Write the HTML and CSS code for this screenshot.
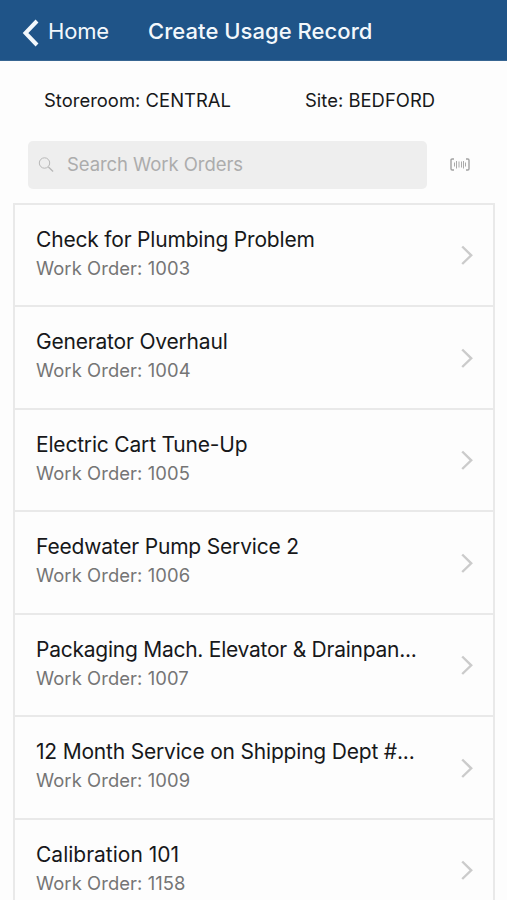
FILE: index.html
```html
<!DOCTYPE html>
<html lang="en">
<head>
<meta charset="utf-8">
<title>Create Usage Record</title>
<link rel="stylesheet" href="styles.css">
</head>
<body>
<svg class="defs" aria-hidden="true"><symbol id="chevron" viewBox="0 0 14 22"><path d="M2.2 2.5 11.2 11.3 2.2 20" fill="none" stroke="currentColor" stroke-width="2.4"/></symbol></svg>
<header class="bar">
  <a class="back"><svg class="back-icon" viewBox="0 0 18 28"><path d="M15 2 3.5 14 15 26" fill="none" stroke="currentColor" stroke-width="4"/></svg><span class="home">Home</span></a>
  <h1 class="heading">Create Usage Record</h1>
</header>
<div class="context"><span class="storeroom">Storeroom: CENTRAL</span><span class="site">Site: BEDFORD</span></div>
<div class="search-row">
  <div class="search">
    <svg class="search-icon" viewBox="0 0 16 16"><g fill="none" stroke="currentColor"><circle cx="6.5" cy="6" r="5.2"/><path d="m10.4 9.9 4.7 4.5" stroke-width="1.4"/></g></svg>
    <span class="placeholder">Search Work Orders</span>
  </div>
  <svg class="scan-icon" viewBox="0 0 20 13"><g fill="none" stroke="currentColor"><path d="M4 1H2.2Q1 1 1 2.2v8.6Q1 12 2.2 12H4M16 1h1.8Q19 1 19 2.2v8.6q0 1.2-1.2 1.2H16" stroke-width="1.4"/><path d="M4.5 4.5v4M6.5 3v7.5M9 3.5v6M11.5 3.5v6M13.5 3v7.5M15.5 4.5v4" stroke-width=".9"/></g></svg>
</div>
<main class="list">
  <a class="row"><div class="text"><div class="title">Check for Plumbing Problem</div><div class="sub">Work Order: 1003</div></div><svg class="chevron"><use href="#chevron"/></svg></a>
  <a class="row"><div class="text"><div class="title">Generator Overhaul</div><div class="sub">Work Order: 1004</div></div><svg class="chevron"><use href="#chevron"/></svg></a>
  <a class="row"><div class="text"><div class="title">Electric Cart Tune-Up</div><div class="sub">Work Order: 1005</div></div><svg class="chevron"><use href="#chevron"/></svg></a>
  <a class="row"><div class="text"><div class="title">Feedwater Pump Service 2</div><div class="sub">Work Order: 1006</div></div><svg class="chevron"><use href="#chevron"/></svg></a>
  <a class="row"><div class="text"><div class="title tight">Packaging Mach. Elevator &amp; Drainpan...</div><div class="sub">Work Order: 1007</div></div><svg class="chevron"><use href="#chevron"/></svg></a>
  <a class="row"><div class="text"><div class="title">12 Month Service on Shipping Dept #...</div><div class="sub">Work Order: 1009</div></div><svg class="chevron"><use href="#chevron"/></svg></a>
  <a class="row"><div class="text"><div class="title loose">Calibration 101</div><div class="sub">Work Order: 1158</div></div><svg class="chevron"><use href="#chevron"/></svg></a>
</main>
</body>
</html>
```
FILE: styles.css
```css
* { box-sizing: border-box; }
html { height: 900px; overflow: hidden; }
body { margin: 0; height: 900px; overflow: hidden; background: #fdfdfd; color: #17181a; font-family: Inter, "Liberation Sans", sans-serif; }
.defs { display: none; }
.bar { display: flex; align-items: center; height: 61px; padding: 1px 0 0 22px; background: #1f5488; color: #f3f8fc; border-bottom: 1px solid #376592; }
.back { display: flex; align-items: center; width: 126px; }
.back-icon { width: 18px; height: 28px; margin: 5px 8px 0 0; }
.home { font-size: 22px; line-height: 28px; letter-spacing: -0.2px; }
.heading { margin: 0; font-size: 22px; line-height: 28px; font-weight: 500; letter-spacing: 0.05px; white-space: nowrap; }
.context { display: flex; height: 80px; padding: 27px 0 0 44px; font-size: 18.4px; line-height: 24px; letter-spacing: 0.03px; }
.storeroom { width: 261px; }
.search-row { display: flex; align-items: center; height: 48px; padding-left: 28px; }
.search { display: flex; align-items: center; width: 399px; height: 48px; padding-left: 10px; border-radius: 5px; background: #eeeeee; color: #acacac; }
.search-icon { width: 16px; height: 16px; margin-right: 13px; color: #b8b8b8; }
.placeholder { font-size: 18.5px; line-height: 24px; letter-spacing: -0.07px; padding-bottom: 3px; }
.scan-icon { width: 20px; height: 13px; margin: 0 0 2px 23px; color: #a2a2a2; }
.list { width: 482px; margin: 13.8px 0 0 13px; border: solid #e9e9e9; border-width: 2px 2px 0; }
.row { display: flex; align-items: center; justify-content: space-between; height: 102.5px; padding: 0 19px 0 21px; border-bottom: 2px solid #e9e9e9; }
.text { padding-bottom: 4.6px; white-space: nowrap; }
.title { font-size: 21px; line-height: 30px; letter-spacing: -0.19px; }
.tight { letter-spacing: -0.25px; }
.loose { letter-spacing: 0; }
.sub { font-size: 18.4px; line-height: 26px; letter-spacing: 0.08px; color: #757575; }
.chevron { width: 14px; height: 22px; color: #cbcbcb; }
```
